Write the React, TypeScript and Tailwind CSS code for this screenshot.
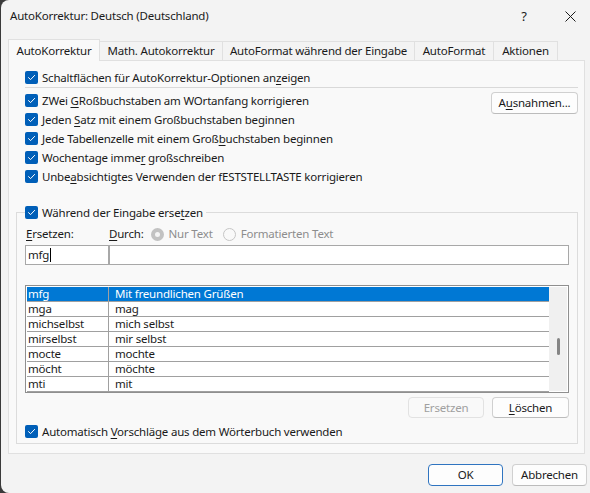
import React from "react";

const Check = () => (
  <span className="w-[13px] h-[13px] rounded-[2px] bg-[#005fb8] flex items-center justify-center shrink-0">
    <svg width="9" height="9" viewBox="0 0 9 9" fill="none">
      <path d="M1.5 4.6 L3.6 6.6 L7.6 2.4" stroke="white" strokeWidth="1" strokeLinecap="round" strokeLinejoin="round" />
    </svg>
  </span>
);

const CB = ({ children }: { children: React.ReactNode }) => (
  <div className="h-[19px] flex items-center gap-[4px]">
    <Check />
    <span className="whitespace-nowrap">{children}</span>
  </div>
);

const U = ({ children }: { children: React.ReactNode }) => (
  <span className="underline underline-offset-[2px]">{children}</span>
);

const rows: [string, string][] = [
  ["mfg", "Mit freundlichen Grüßen"],
  ["mga", "mag"],
  ["michselbst", "mich selbst"],
  ["mirselbst", "mir selbst"],
  ["mocte", "mochte"],
  ["möcht", "möchte"],
  ["mti", "mit"],
];

export default function App() {
  return (
    <div className="w-[590px] h-[493px] bg-[#3a3a3a] overflow-hidden">
      <div className="ml-[1px] h-full bg-[#f3f3f3] rounded-tl-[8px] rounded-bl-[8px] flex flex-col font-['Noto_Sans',sans-serif] text-[11.5px] tracking-[-0.2px] leading-[16px] text-[#1a1a1a]">
        {/* Title bar */}
        <div className="h-[32px] flex items-center shrink-0">
          <span className="pl-[9px] whitespace-nowrap">AutoKorrektur: Deutsch (Deutschland)</span>
          <div className="ml-auto flex items-center h-full">
            <div className="w-[46px] mr-[3px] h-full flex items-center justify-center text-[13px]">?</div>
            <div className="w-[40px] h-full flex items-center justify-center">
              <svg width="11" height="11" viewBox="0 0 11 11">
                <path d="M0.5 0.5 L10.5 10.5 M10.5 0.5 L0.5 10.5" stroke="#1a1a1a" strokeWidth="1" />
              </svg>
            </div>
          </div>
        </div>

        {/* Tabs */}
        <div className="mt-[7px] h-[21px] flex items-end pl-[7px] shrink-0 relative z-10">
          <div className="w-[92px] h-[22px] -mb-[1px] bg-[#f9f9f9] border border-b-0 border-[#e0e0e0] flex items-center justify-center whitespace-nowrap">
            AutoKorrektur
          </div>
          <div className="w-[123px] h-[19px] border-t border-r border-[#e0e0e0] flex items-center justify-center whitespace-nowrap">
            Math. Autokorrektur
          </div>
          <div className="w-[192px] h-[19px] border-t border-r border-[#e0e0e0] flex items-center justify-center whitespace-nowrap">
            AutoFormat während der Eingabe
          </div>
          <div className="w-[79px] h-[19px] border-t border-r border-[#e0e0e0] flex items-center justify-center whitespace-nowrap">
            AutoFormat
          </div>
          <div className="w-[64px] h-[19px] border-t border-r border-[#e0e0e0] flex items-center justify-center whitespace-nowrap">
            Aktionen
          </div>
        </div>

        {/* Panel */}
        <div className="ml-[7px] w-[577px] h-[394px] bg-[#f9f9f9] border border-[#e0e0e0] flex flex-col shrink-0">
          <div className="mt-[7px] pl-[16px]">
            <CB>
              Schaltflächen für AutoKorrektur-Optionen an<U>z</U>eigen
            </CB>
          </div>
          <div className="ml-[16px] mr-[6px] h-[1px] bg-[#d9d9d9]" />
          <div className="mt-[3px] pl-[16px] pr-[6px] flex items-start">
            <div className="flex flex-col">
              <CB>
                ZWei <U>G</U>Roßbuchstaben am WOrtanfang korrigieren
              </CB>
              <CB>
                Jeden <U>S</U>atz mit einem Großbuchstaben beginnen
              </CB>
              <CB>
                Jede Tabellenzelle mit einem Groß<U>b</U>uchstaben beginnen
              </CB>
              <CB>
                Wochentage imme<U>r</U> großschreiben
              </CB>
              <CB>
                Unbe<U>a</U>bsichtigtes Verwenden der fESTSTELLTASTE korrigieren
              </CB>
            </div>
            <button className="ml-auto mt-[1px] w-[87px] h-[22px] rounded-[4px] bg-[#fdfdfd] border border-[#d0d0d0] border-b-[#bcbcbc] flex items-center justify-center whitespace-nowrap">
              A<U>u</U>snahmen...
            </button>
          </div>

          {/* Group */}
          <fieldset className="mt-[17px] ml-[7px] mr-[6px] border border-[#dcdcdc] pl-[8px] pr-[8px] pb-[2px]">
            <legend className="pr-[3px]">
              <CB>
                Während der Eingabe erse<U>t</U>zen
              </CB>
            </legend>
            <div className="mt-[3px] h-[18px] flex items-center">
              <span className="ml-[1px] w-[83px]">
                <U>E</U>rsetzen:
              </span>
              <span>
                <U>D</U>urch:
              </span>
              <span className="ml-[7px] w-[13px] h-[13px] rounded-full border-[4px] border-[#c2c2c2] bg-[#f4f4f4]" />
              <span className="ml-[5px] text-[#8d8d8d]">Nur Text</span>
              <span className="ml-[10px] w-[13px] h-[13px] rounded-full border border-[#c6c6c6] bg-[#f9f9f9]" />
              <span className="ml-[5px] text-[#8d8d8d]">Formatierten Text</span>
            </div>
            <div className="mt-[2px] h-[20px] flex">
              <div className="w-[84px] h-full bg-white border border-[#a8a8a8] flex items-center pl-[2px]">
                mfg<span className="ml-[1px] w-[1px] h-[14px] bg-black" />
              </div>
              <div className="flex-1 h-full bg-white border border-[#a8a8a8]" />
            </div>

            {/* List */}
            <div className="mt-[20px] h-[108px] bg-white border border-[#8f8f8f] p-[1px] flex">
              <div className="flex-1 flex flex-col">
                {rows.map(([a, b], i) => (
                  <div
                    key={a}
                    className={`h-[15px] flex items-center border-b border-[#a0a0a0] leading-[14px] ${i === 0 ? "bg-[#0078d4] text-white" : ""}`}
                  >
                    <div className="w-[82px] h-full flex items-center pl-[1px] border-r border-[#a0a0a0] whitespace-nowrap">{a}</div>
                    <div className="pl-[6px] whitespace-nowrap">{b}</div>
                  </div>
                ))}
              </div>
              <div className="w-[18px] bg-[#f0f0f0] flex justify-center">
                <div className="mt-[51px] w-[3px] h-[17px] rounded-full bg-[#858585]" />
              </div>
            </div>

            <div className="mt-[4px] flex justify-end gap-[8px]">
              <button className="w-[76px] h-[21px] rounded-[4px] bg-[#f9f9f9] border border-[#e2e2e2] text-[#a0a0a0] flex items-center justify-center">
                Ersetzen
              </button>
              <button className="w-[77px] h-[21px] rounded-[4px] bg-[#fdfdfd] border border-[#d0d0d0] border-b-[#bcbcbc] flex items-center justify-center">
                <U>L</U>öschen
              </button>
            </div>
            <div className="mt-[4px]">
              <CB>
                Automatisch <U>V</U>orschläge aus dem Wörterbuch verwenden
              </CB>
            </div>
          </fieldset>
        </div>

        {/* Footer */}
        <div className="mt-[10px] flex justify-end gap-[9px] pr-[3px]">
          <button className="w-[75px] h-[22px] rounded-[4px] bg-[#fdfdfd] border border-[#2f74c0] flex items-center justify-center">
            OK
          </button>
          <button className="w-[75px] h-[22px] rounded-[4px] bg-[#fdfdfd] border border-[#d0d0d0] border-b-[#bcbcbc] flex items-center justify-center">
            Abbrechen
          </button>
        </div>
      </div>
    </div>
  );
}
